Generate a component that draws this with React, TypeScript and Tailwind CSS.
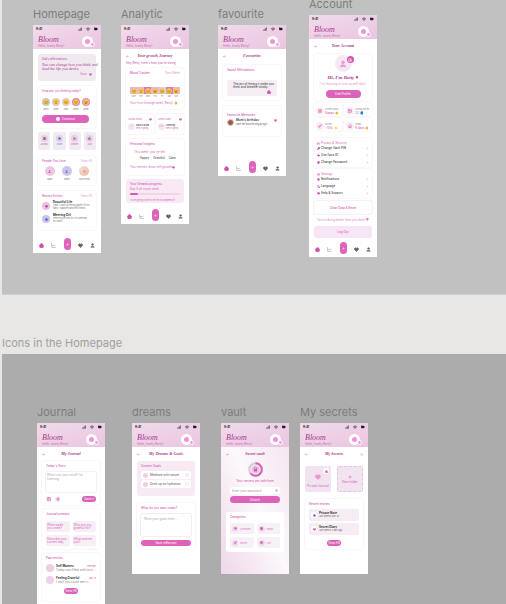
import type { ReactNode } from "react";
import {
  ArrowLeft, Camera, ChartLine, ChevronRight, Bell, Eye, FileText, Heart, House, Image as ImageIcon,
  Key, KeyRound, Languages, Lock, Mic, Moon, Plus, Settings, Shield, Star, User, Wifi, Signal, BatteryFull, Folder, Search,
} from "lucide-react";

const script = "font-['Liberation_Serif',serif] italic text-[#a8358c]";

type IconType = typeof Heart;

function Icon({ as: As, className }: { as: IconType; className: string }) {
  return <As className={"shrink-0 " + className} strokeWidth={3} aria-hidden="true" />;
}

function Artboard({ label, place, size, nav, tint, children }: {
  label: string; place: string; size: string; nav?: boolean; tint?: string; children: ReactNode;
}) {
  return (
    <section className={"absolute w-[68px] " + place}>
      <h2 className="h-[15px] whitespace-nowrap text-[11px] leading-[8px] text-[#7d7d7d]">{label}</h2>
      <div className={"flex flex-col overflow-hidden text-[3px] leading-[4px] text-[#d465b3] " + size + " " + (tint ?? "bg-white")}>
        <Header />
        <div className="flex-1 px-[5px]">{children}</div>
        {nav && <TabBar />}
      </div>
    </section>
  );
}

function Header() {
  return (
    <header className="h-6 shrink-0 bg-linear-to-br from-[#f1dbeb] to-[#eac5e0]">
      <div className="flex h-2 items-center justify-between px-[3px] text-[#222]">
        <span className="font-bold">9:41</span>
        <span className="flex items-center gap-1">
          <Icon as={Signal} className="size-[4px]" />
          <Icon as={Wifi} className="size-[4px]" />
          <Icon as={BatteryFull} className="size-[4px] fill-current" />
        </span>
      </div>
      <div className="flex items-start justify-between pr-2 pl-[5px]">
        <div className="pt-[3px]">
          <p className={"text-[8px] leading-[8px] " + script}>Bloom</p>
          <p className="whitespace-nowrap text-[#cc68b0]">Hello, lovely Betty!</p>
        </div>
        <div className="relative mt-[3px] size-[11px] rounded-full bg-white p-[3px]">
          <div className="size-[5px] rounded-full bg-[#f093da]" />
          <span className="absolute -right-[2px] bottom-0 size-[5px] rounded-full border border-white bg-[#f3a0dd]" />
        </div>
      </div>
    </header>
  );
}

function TabBar() {
  return (
    <nav aria-label="Main" className="mb-[3px] flex h-3 shrink-0 items-center justify-between px-[6px] text-[#666]">
      <button aria-label="Home" className="mt-[3px]"><Icon as={House} className="size-[5px] fill-[#d04fac] text-[#d04fac]" /></button>
      <button aria-label="Analytics" className="mt-[3px]"><Icon as={ChartLine} className="size-[5px] opacity-60" /></button>
      <button aria-label="Add" className="flex h-3 w-[7px] items-center justify-center rounded-full bg-[#df62bb] text-white"><Icon as={Plus} className="size-[3px]" /></button>
      <button aria-label="Favourites" className="mt-[3px]"><Icon as={Heart} className="size-[5px] fill-current" /></button>
      <button aria-label="Account" className="mt-[3px]"><Icon as={User} className="size-[5px] fill-current" /></button>
    </nav>
  );
}

function TitleRow({ title, extra }: { title: string; extra?: boolean }) {
  return (
    <div className="flex h-[14px] items-center justify-between">
      <button aria-label="Back"><Icon as={ArrowLeft} className="size-[3px]" /></button>
      <h3 className={"whitespace-nowrap text-[4px] leading-[4px] font-bold " + script}>{title}</h3>
      <span className="size-[3px]">{extra && <Icon as={Search} className="size-[3px] opacity-60" />}</span>
    </div>
  );
}

function Card({ className, children }: { className: string; children: ReactNode }) {
  return (
    <div className={"rounded-[3px] px-1 pt-[3px] " + (className.includes("bg-") ? "" : "bg-white ring-1 ring-[#faf7fa] ") + className}>
      {children}
    </div>
  );
}

function CardTitle({ children, right }: { children: string; right?: string }) {
  return (
    <div className="flex justify-between whitespace-nowrap">
      <h4 className="font-medium text-[#cf58ae]">{children}</h4>
      {right && <a href="#all" className="opacity-70">{right}</a>}
    </div>
  );
}

function Pill({ className, children }: { className: string; children: ReactNode }) {
  return <button className={"flex items-center justify-center rounded-full bg-[#dd62ba] whitespace-nowrap text-white " + className}>{children}</button>;
}

function Face({ mood, className }: { mood: "sad" | "calm" | "happy" | "laugh"; className: string }) {
  return (
    <svg viewBox="0 0 16 16" className={className} aria-hidden="true">
      <circle cx="8" cy="8" r="7.5" fill="#f9ca45" />
      <path d="M3.5 6.5q1.5-2 3 0M9.5 6.5q1.5-2 3 0" stroke="#754329" strokeWidth="1.3" fill="none" />
      {mood === "sad" && <><path d="M5 12q3-4 6 0" stroke="#754329" strokeWidth="1.5" fill="none" /><path d="M3.5 8v4M12.5 8v4" stroke="#62aee5" strokeWidth="2" /></>}
      {mood === "calm" && <path d="M5 11h6" stroke="#754329" strokeWidth="1.5" />}
      {mood === "happy" && <path d="M4 9.5q4 4 8 0" stroke="#754329" strokeWidth="1.5" fill="none" />}
      {mood === "laugh" && <path d="M3.5 9h9q-4.5 7-9 0z" fill="#a83f32" />}
    </svg>
  );
}

function Dot({ as, className, icon }: { as?: IconType; className: string; icon?: string }) {
  return (
    <span className={"flex shrink-0 items-center justify-center rounded-full " + className}>
      {as && <Icon as={as} className={icon ?? "size-[3px] fill-current"} />}
    </span>
  );
}

function Homepage() {
  const moods = [
    { name: "awful", mood: "sad", ring: "bg-[#c9c5d2]" },
    { name: "upset", mood: "calm", ring: "bg-[#dcc9de]" },
    { name: "okay", mood: "happy", ring: "bg-[#e9c4df]" },
    { name: "better", mood: "happy", ring: "bg-[#d884bf]" },
    { name: "great", mood: "laugh", ring: "bg-[#e68bd2]" },
  ] as const;
  const tiles = [
    { name: "Journal", icon: FileText, color: "text-[#c1559e]" },
    { name: "Vision", icon: Star, color: "text-[#7166d8]" },
    { name: "Dreams", icon: Moon, color: "text-[#d15bab]" },
    { name: "Vault", icon: Lock, color: "text-[#c765ab]" },
  ];
  const people = [
    { name: "Sarah", icon: User, dot: "bg-[#edc8e3] text-[#d35db0]" },
    { name: "Daniel", icon: User, dot: "bg-[#cbc5e6] text-[#7166d8]" },
    { name: "Add Person", icon: Plus, dot: "bg-linear-to-br from-[#f3dfe6] to-[#f1b694] text-[#c9705a]" },
  ];
  return (
    <Artboard label="Homepage" place="left-[33px] top-[10px]" size="h-[228px]" nav>
      <Card className="mt-[5px] h-[27px] bg-[#f0eaf0] pt-1">
        <CardTitle>Daily affirmations</CardTitle>
        <p className={"mt-[2px] whitespace-nowrap text-[4px] leading-[4px] " + script}>You can change how you think and<br />lead the life you desire.</p>
        <button className="mt-px ml-auto flex items-center gap-[2px]">Save <Icon as={Heart} className="size-[3px] fill-current" /></button>
      </Card>
      <Card className="mt-[5px] h-[42px]">
        <h4 className="font-medium whitespace-nowrap">How are you feeling today?</h4>
        <div className="mt-[5px] flex gap-[2px]">
          {moods.map((m) => (
            <button key={m.name} className="flex w-2 flex-col items-center gap-px text-[2px] leading-[4px] text-[#777]">
              <span className={"rounded-full p-px " + m.ring}><Face mood={m.mood} className="size-[6px]" /></span>{m.name}
            </button>
          ))}
        </div>
        <Pill className="mt-1 h-2 w-[47px] gap-[2px]"><span className="size-1 rounded-full bg-white" />Continue</Pill>
      </Card>
      <div className="mt-1 grid grid-cols-4 gap-[3px]">
        {tiles.map((t) => (
          <button key={t.name} className={"flex h-[18px] flex-col items-center gap-px rounded-[2px] bg-[#efebf1] pt-[3px] text-[2px] leading-[3px] " + t.color}>
            <Dot as={t.icon} className="size-[7px] bg-[#dfd2e2]" />{t.name}
          </button>
        ))}
      </div>
      <Card className="mt-[6px] h-[29px]">
        <CardTitle right="View All">People You Love</CardTitle>
        <div className="mt-[3px] grid grid-cols-3 gap-[2px] text-center text-[#777]">
          {people.map((p) => (
            <div key={p.name} className="flex flex-col items-center gap-px text-[2px] whitespace-nowrap">
              <Dot as={p.icon} className={"size-[10px] " + p.dot} />{p.name}
            </div>
          ))}
        </div>
      </Card>
      <Card className="mt-[6px] h-[39px]">
        <CardTitle right="View All">Recent Entries</CardTitle>
        <Entry dot="bg-[#e9c0dd] text-[#c23b94]" icon={Heart} title="Beautiful Life" body={["Today I woke up feeling grateful for my", "family, happiness and new friends..."]} />
        <Entry dot="bg-[#c9c3ea] text-[#6355dd]" icon={Star} title="Meeting Girl" body={["Reflecting on how far I've come and", "my hopes..."]} />
      </Card>
    </Artboard>
  );
}

function Entry({ dot, icon, title, body }: { dot: string; icon: IconType; title: string; body: string[] }) {
  return (
    <div className="mt-[3px] flex items-center gap-[3px] whitespace-nowrap">
      <Dot as={icon} className={"size-2 " + dot} />
      <div className="h-[10px] leading-[3px] text-[#777]">
        <p className="font-bold text-[#333]">{title}</p>
        {body.map((line) => <p key={line} className="text-[2px]">{line}</p>)}
      </div>
    </div>
  );
}

function Analytic() {
  const days = [
    ["Mon", "happy"], ["Tue", "calm"], ["Wed", "happy"], ["Thu", "laugh"], ["Fri", "sad"], ["Sat", "happy"], ["Sun", "laugh"],
  ] as const;
  return (
    <Artboard label="Analytic" place="left-[121px] top-[10px]" size="h-[199px]" nav>
      <TitleRow title="Your growth Journey" />
      <p className="-mt-[2px] whitespace-nowrap text-[#cb4fa8]">Hey Betty, here's how you're doing</p>
      <Card className="mt-[3px] h-[41px]">
        <CardTitle right="Past Week">Mood Tracker</CardTitle>
        <div className="mt-3 grid grid-cols-7 text-center text-[2px] leading-[4px] text-[#888]">
          {days.map(([d, m], i) => (
            <div key={d}>
              <div className={"flex h-[7px] items-center justify-center " + (i % 3 === 2 ? "bg-[#d978c0]" : i === 4 ? "bg-[#d9d4de]" : "bg-[#eab5dd]")}><Face mood={m} className="size-[6px]" /></div>
              {d}
            </div>
          ))}
        </div>
        <p className="mt-[3px] whitespace-nowrap">Your first through week, Betty! 🔥</p>
      </Card>
      <div className="mt-[5px] grid grid-cols-2 gap-[2px]">
        {[["Journal Streak", "4", "Days in a row"], ["Comm. Goals", "42%", "Cheering"]].map(([t, n, s]) => (
          <Card key={t} className="h-5 px-[2px]">
            <div className="flex items-center justify-between text-[2px] leading-[4px] whitespace-nowrap">{t}<Icon as={Heart} className="size-[3px] fill-current" /></div>
            <div className="mt-[2px] flex items-center gap-px">
              <span className="flex size-[7px] shrink-0 items-center justify-center rounded-full bg-[#f4e6f2] text-[2px] leading-[3px]">{n}</span>
              <div className="text-[2px] leading-[3px] whitespace-nowrap"><p className="font-bold text-[#555]">{s}</p><p>keep it going</p></div>
            </div>
          </Card>
        ))}
      </div>
      <Card className="mt-[5px] h-9">
        <CardTitle>Personal Insights</CardTitle>
        <p className="mt-1 pl-1">This week, you've felt</p>
        <div className="mt-[2px] flex justify-end gap-[4px] pr-1 font-medium text-[#555]"><span>Happy</span><span>Grateful</span><span>Calm</span></div>
        <p className="mt-[5px] flex items-center whitespace-nowrap">Your entries show self growth <Icon as={Heart} className="size-[3px] fill-current" /></p>
      </Card>
      <Card className="mt-1 h-6 bg-[#f8e9f5] pt-[2px]">
        <CardTitle>Your Dreams progress</CardTitle>
        <p className="mt-px">Day 5 of vision work</p>
        <div className="mt-[2px] h-[2px] rounded-full bg-[#f0d5e9]"><div className="h-[2px] w-1/6 rounded-full bg-[#d95ab4]" /></div>
        <p className="mt-[3px] text-[2px] leading-[4px] whitespace-nowrap">You're getting closer to the life you dreamed of!</p>
      </Card>
    </Artboard>
  );
}

function Favourite() {
  return (
    <Artboard label="favourite" place="left-[218px] top-[10px]" size="h-[151px]" nav>
      <TitleRow title="Favourites" />
      <Card className="mt-[2px] h-[35px]">
        <CardTitle>Saved Affirmations</CardTitle>
        <div className="mt-2 h-4 rounded-[2px] bg-[#f4eef4] px-[6px] pt-[3px] text-[#333]">
          <p className="leading-[3px] whitespace-nowrap">The act of letting it make you<br />think and breathe slowly.</p>
          <Icon as={Lock} className="mt-px ml-auto size-[4px] fill-current text-[#dd4bb5]" />
        </div>
      </Card>
      <Card className="mt-[6px] h-[30px] pt-[7px]">
        <CardTitle>Favourite Memories</CardTitle>
        <div className="mt-[2px] flex items-center gap-[2px]">
          <Dot className="size-[7px] border border-[#d8cddc] bg-[#a4573f]" />
          <div className="flex-1 whitespace-nowrap text-[#555]"><p className="leading-[3px] font-bold">Mum's birthday</p><p className="text-[2px] leading-[4px]">Cake, her favourite song all night</p></div>
          <Icon as={Heart} className="mb-1 size-[3px] fill-current" />
        </div>
      </Card>
    </Artboard>
  );
}

function MenuCard({ title, icon, rows, className }: { title: string; icon: IconType; rows: [string, IconType][]; className: string }) {
  return (
    <Card className={"px-[3px] pt-[2px] " + className}>
      <h4 className="flex items-center gap-px text-[3px]"><Icon as={icon} className="size-[3px]" />{title}</h4>
      <ul className="mt-px space-y-[3px] text-[#444]">
        {rows.map(([name, rowIcon]) => (
          <li key={name}>
            <button className="flex w-full items-center gap-px font-medium">
              <Icon as={rowIcon} className="size-[3px] fill-current text-[#cf4bab]" />
              <span className="flex-1 text-left">{name}</span>
              <Icon as={ChevronRight} className="size-[3px] text-[#cf4bab]" />
            </button>
          </li>
        ))}
      </ul>
    </Card>
  );
}

function Account() {
  const stats: [string, string, IconType][] = [
    ["Current Mood", "Happy 😊", FileText], ["Journal Entries", "32 📘", ImageIcon], ["Growth", "+15% ⭐", Key], ["Streak", "9 days 🔥", House],
  ];
  return (
    <Artboard label="Account" place="left-[309px] top-0" size="h-[242px]" nav>
      <TitleRow title="Your Account" />
      <Card className="mt-px flex h-[46px] flex-col items-center pt-px">
        <div className="relative flex size-[17px] shrink-0 items-center justify-center rounded-full bg-[#f4e8f3]">
          <Icon as={User} className="size-[8px] fill-current text-[#f09ad8]" />
          <span className="absolute -right-[2px] top-px flex size-[7px] items-center justify-center rounded-full bg-[#d653b2] text-white"><Icon as={Camera} className="size-1" /></span>
        </div>
        <p className={"mt-[3px] text-[5px] leading-[5px] font-bold " + script}>Hi, I'm Betty ♥</p>
        <p className="mt-[2px] whitespace-nowrap opacity-70">"I'm learning to love myself daily"</p>
        <Pill className="mt-1 h-2 w-[35px] shrink-0">Edit Profile</Pill>
      </Card>
      <div className="mt-[3px] grid grid-cols-2 gap-[2px]">
        {stats.map(([t, v, icon]) => (
          <Card key={t} className="flex h-[13px] items-center gap-px px-[2px] pt-0">
            <Dot as={icon} className="size-[8px] bg-[#f7edf6]" icon="size-[4px]" />
            <div className="whitespace-nowrap"><p className="text-[2px] leading-[3px] text-[#888]">{t}</p><p className="font-medium">{v}</p></div>
          </Card>
        ))}
      </div>
      <MenuCard className="mt-[7px] h-[29px]" title="Privacy & Security" icon={Lock} rows={[["Change Vault PIN", KeyRound], ["Use Face ID", Eye], ["Change Password", Shield]]} />
      <MenuCard className="mt-[2px] h-[29px]" title="Settings" icon={Settings} rows={[["Notifications", Bell], ["Language", Languages], ["Help & Support", Heart]]} />
      <button className="mt-[3px] h-[13px] w-full rounded-[3px] font-medium ring-1 ring-[#f7f0f6]">Clear Data &amp; Reset</button>
      <p className="mt-1 text-center whitespace-nowrap opacity-80">You're doing better than you think ♥</p>
      <button className="mt-1 h-3 w-full rounded-[3px] bg-[#f8e5f5] font-medium">Log Out</button>
    </Artboard>
  );
}

function Journal() {
  return (
    <Artboard label="Journal" place="left-[37px] top-[54px]" size="h-[200px]">
      <TitleRow title="My Journal" />
      <Card className="h-[44px] ring-[#f5f0f5]">
        <CardTitle>Today's Story</CardTitle>
        <textarea aria-label="Today's story" placeholder="What's on your mind? I'm listening" className="mt-1 block h-5 w-full resize-none overflow-hidden rounded-[2px] p-px ring-1 ring-[#f7edf5] placeholder:text-[#aaa]" />
        <div className="mt-1 flex items-center gap-1">
          <button aria-label="Add image"><Dot as={ImageIcon} className="size-[5px] bg-[#f7e5f3]" icon="size-[4px]" /></button>
          <button aria-label="Record"><Dot as={Mic} className="size-[5px] bg-[#f7e5f3]" icon="size-[4px]" /></button>
          <Pill className="ml-auto h-[6px] w-[14px]">Save it</Pill>
        </div>
      </Card>
      <Card className="mt-1 h-10 ring-[#f5f0f5]">
        <CardTitle>Journal prompts</CardTitle>
        <div className="mt-[5px] grid grid-cols-2 gap-[3px]">
          {[["What made", "you smile?"], ["Who are you", "grateful for?"], ["Describe your", "current day."], ["What worries", "you?"]].map(([a, b]) => (
            <button key={a} className="h-[11px] rounded-[2px] bg-[#f6eff6] pl-px text-left leading-[3px] whitespace-nowrap">{a}<br />{b}</button>
          ))}
        </div>
      </Card>
      <Card className="mt-1 h-12 ring-[#f5f0f5]">
        <CardTitle>Past entries</CardTitle>
        <div className="mt-1">
          {[["Self Matters", "Yesterday", "Today was filled with love..."], ["Feeling Grateful", "May 28", "I wish you could see it..."]].map(([t, d, b]) => (
            <div key={t} className="mb-1 flex h-2 items-center gap-[2px] whitespace-nowrap">
              <Dot className="size-2 bg-[#edd0e6]" />
              <div className="flex-1"><p className="flex justify-between font-bold text-[#333]">{t}<span className="text-[2px] font-normal text-[#d05aad]">{d}</span></p><p className="text-[#888]">{b}</p></div>
            </div>
          ))}
        </div>
        <Pill className="mx-auto h-[6px] w-[14px]">View All</Pill>
      </Card>
    </Artboard>
  );
}

function Dreams() {
  return (
    <Artboard label="dreams" place="left-[132px] top-[54px]" size="h-[151px]">
      <TitleRow title="My Dreams & Goals" />
      <Card className="h-[35px] bg-[#f8eaf5]">
        <CardTitle>Current Goals</CardTitle>
        <div className="mt-[3px] space-y-px">
          {["Meditate with nature", "Drink up on hydration"].map((goal) => (
            <label key={goal} className="flex h-2 items-center gap-[2px] rounded-[2px] bg-white px-[2px] whitespace-nowrap text-[#555]">
              <Dot className="size-[5px] bg-[#edcfe6]" /><span className="flex-1">{goal}</span>
              <input type="checkbox" className="size-1 appearance-none rounded-full border border-[#f0e2ee]" />
            </label>
          ))}
        </div>
      </Card>
      <Card className="mt-[7px] h-[46px] ring-[#f5f0f5]">
        <label htmlFor="manifest" className="block font-medium whitespace-nowrap">What do you want today?</label>
        <textarea id="manifest" placeholder="Write your goals here..." className="mt-1 block h-[22px] w-full resize-none overflow-hidden rounded-[2px] p-[3px] ring-1 ring-[#f4edf3] placeholder:text-[#aaa]" />
        <Pill className="mt-1 h-[6px] w-full">Save reflection</Pill>
      </Card>
    </Artboard>
  );
}

function Vault() {
  const categories: [string, IconType][] = [["Love Notes", Heart], ["Photos", ImageIcon], ["Secrets", Key], ["Lists", Folder]];
  return (
    <Artboard label="vault" place="left-[221px] top-[54px]" size="h-[151px]" tint="bg-linear-to-tr from-[#efd7e9] via-[#fcf8fc] to-[#f3e2ef]">
      <TitleRow title="Secret vault" />
      <svg viewBox="0 0 30 30" className="mx-auto mt-px size-[15px]" aria-hidden="true">
        <circle cx="15" cy="15" r="12.5" fill="#f8edf6" stroke="#d2ced5" strokeWidth="4" />
        <path d="M15 2.5A12.5 12.5 0 1 1 5 22.5" fill="none" stroke="#dc5fba" strokeWidth="4" />
        <circle cx="15" cy="15" r="8" fill="#e8c1df" />
        <rect x="12" y="14" width="6" height="5" fill="#d55bb3" />
        <path d="M13 14v-2q2-3 4 0v2" fill="none" stroke="#d55bb3" strokeWidth="1.5" />
      </svg>
      <p className="mt-[2px] text-center font-medium whitespace-nowrap">Your secrets are safe here</p>
      <div className="mx-1 mt-1 flex h-[7px] items-center rounded-[2px] bg-white px-[2px]">
        <input aria-label="Password" placeholder="Enter your password" className="h-1 min-w-0 flex-1 placeholder:text-[#a98fa5]" />
        <Icon as={Eye} className="size-[3px]" />
      </div>
      <div className="mx-1 mt-[2px]"><Pill className="h-[7px] w-full">Unlock</Pill></div>
      <Card className="mt-[9px] h-10 bg-white">
        <CardTitle>Categories</CardTitle>
        <div className="mt-1 grid grid-cols-2 gap-[3px]">
          {categories.map(([name, icon]) => (
            <button key={name} className="flex h-[11px] items-center gap-[2px] rounded-[2px] bg-[#f6f1f6] pl-[2px] text-[2px] whitespace-nowrap">
              <Dot as={icon} className="size-[6px] bg-[#eed7e9]" />{name}
            </button>
          ))}
        </div>
      </Card>
    </Artboard>
  );
}

function Secrets() {
  return (
    <Artboard label="My secrets" place="left-[300px] top-[54px]" size="h-[151px]">
      <TitleRow title="My Secrets" extra />
      <div className="mt-[5px] grid grid-cols-2 gap-[6px]">
        <button className="relative flex h-[26px] flex-col items-center justify-center gap-1 rounded-[2px] bg-[#f2e3f0] pt-[3px] text-[3px] whitespace-nowrap">
          <Icon as={Heart} className="size-[6px] fill-current text-[#eb92d2]" />Private Journal
          <Dot as={Lock} className="absolute top-[2px] right-[2px] size-[6px] bg-white" />
        </button>
        <button className="flex h-[26px] flex-col items-center justify-center gap-px rounded-[2px] border border-dashed border-[#e4c6dd] bg-[#f2e3f0]">
          <Icon as={Plus} className="size-1" />New folder
        </button>
      </div>
      <Card className="mt-[7px] h-[50px] ring-[#f3eef3]">
        <CardTitle>Recent entries</CardTitle>
        <div className="mt-[3px] space-y-[2px]">
          {([["Private Note", "Last opened: May 26", Star, "text-[#7164db]"], ["Secret Diary", "Last opened: 3 days ago", Heart, "text-[#df4fb4]"]] as const).map(([t, s, icon, color]) => (
            <div key={t} className="flex h-3 items-center gap-[2px] rounded-[2px] bg-[#f6ecf4] px-[2px] whitespace-nowrap">
              <Dot as={icon} className={"size-[6px] bg-white " + color} />
              <div className="leading-[3px] text-[#666]"><p className="font-bold text-[#333]">{t}</p><p className="text-[2px]">{s}</p></div>
            </div>
          ))}
        </div>
        <Pill className="mx-auto mt-[5px] h-[6px] w-[14px]">View All</Pill>
      </Card>
    </Artboard>
  );
}

export default function App() {
  return (
    <main className="flex h-screen flex-col overflow-hidden bg-[#e8e7e5] pl-[2px] font-['Inter',sans-serif]">
      <div className="relative h-[295px] shrink-0 overflow-hidden border-b border-[#cfcfcf] bg-[#c1c1c1]">
        <div className="absolute top-0 -left-[2px]">
          <Homepage />
          <Analytic />
          <Favourite />
          <Account />
        </div>
      </div>
      <h1 className="h-[59px] shrink-0 pt-[41px] text-[11px] leading-[14px] text-[#a0a09e]">Icons in the Homepage</h1>
      <div className="relative flex-1 overflow-hidden bg-[#acacac]">
        <div className="absolute top-0 -left-[2px]">
          <Journal />
          <Dreams />
          <Vault />
          <Secrets />
        </div>
      </div>
    </main>
  );
}
